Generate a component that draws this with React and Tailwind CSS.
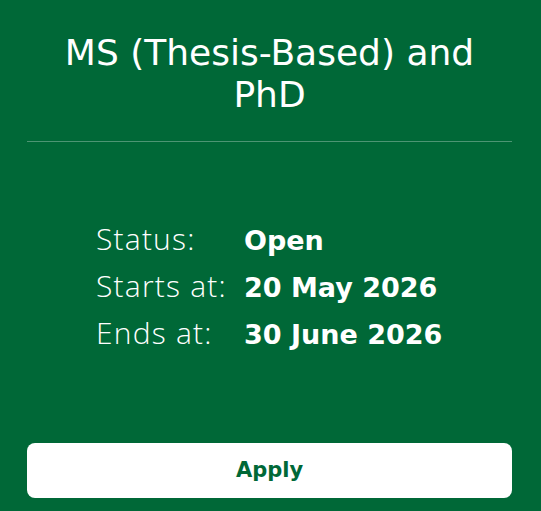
function App() {
  const rows = [
    { label: "Status:", value: "Open" },
    { label: "Starts at:", value: "20 May 2026" },
    { label: "Ends at:", value: "30 June 2026" },
  ];

  return (
    <div
      className="min-h-screen bg-[#006837] text-white pl-[27px] pr-[29px] flex flex-col"
      style={{ fontFamily: '"DejaVu Sans", "Open Sans", sans-serif' }}
    >
      <h1 className="pt-[32px] pb-[25px] px-[20px] text-center text-[36px] leading-[42px] font-normal">
        MS (Thesis-Based) and PhD
      </h1>
      <hr className="border-0 h-px bg-white/30" />

      <div className="pt-[74px] pl-[69px]">
        {rows.map((r) => (
          <div key={r.label} className="flex items-baseline h-[47px]">
            <span className="w-[148px] text-[30px] font-light font-['Open_Sans'] tracking-[0.04em]">
              {r.label}
            </span>
            <span className="text-[27px] font-bold">{r.value}</span>
          </div>
        ))}
      </div>

      <div className="flex-1" />
      <button className="mb-[13px] h-[55px] w-full rounded-lg bg-white text-[#006837] text-[21px] font-bold">
        Apply
      </button>
    </div>
  );
}

export default App;
